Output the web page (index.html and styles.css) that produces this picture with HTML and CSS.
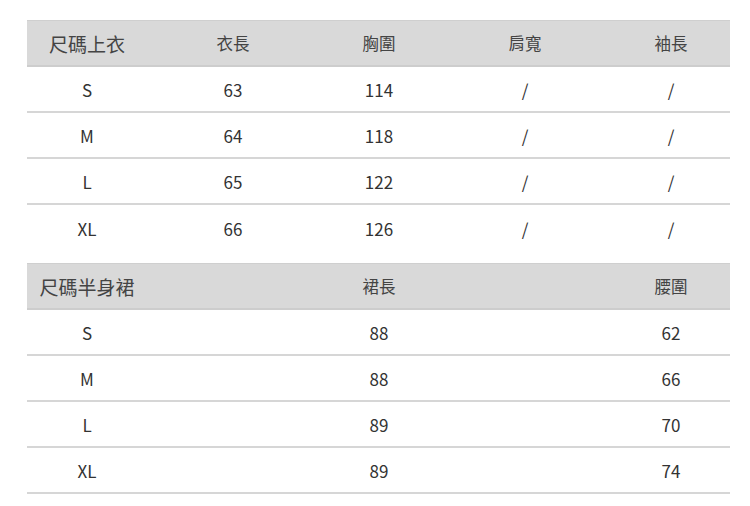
FILE: index.html
```html
<!DOCTYPE html>
<html lang="zh-Hant">
<head>
<meta charset="utf-8">
<link rel="stylesheet" href="styles.css">
</head>
<body>
<div class="page">
  <div class="tbl five">
    <div class="row head">
      <div class="cell first big">尺碼上衣</div>
      <div class="cell">衣長</div>
      <div class="cell">胸圍</div>
      <div class="cell">肩寬</div>
      <div class="cell last">袖長</div>
    </div>
    <div class="row line">
      <div class="cell first">S</div><div class="cell">63</div><div class="cell">114</div><div class="cell">/</div><div class="cell last">/</div>
    </div>
    <div class="row line">
      <div class="cell first">M</div><div class="cell">64</div><div class="cell">118</div><div class="cell">/</div><div class="cell last">/</div>
    </div>
    <div class="row line">
      <div class="cell first">L</div><div class="cell">65</div><div class="cell">122</div><div class="cell">/</div><div class="cell last">/</div>
    </div>
    <div class="row">
      <div class="cell first">XL</div><div class="cell">66</div><div class="cell">126</div><div class="cell">/</div><div class="cell last">/</div>
    </div>
  </div>
  <div class="tbl three">
    <div class="row head">
      <div class="cell first big">尺碼半身裙</div>
      <div class="cell">裙長</div>
      <div class="cell last">腰圍</div>
    </div>
    <div class="row line">
      <div class="cell first">S</div><div class="cell">88</div><div class="cell last">62</div>
    </div>
    <div class="row line">
      <div class="cell first">M</div><div class="cell">88</div><div class="cell last">66</div>
    </div>
    <div class="row line">
      <div class="cell first">L</div><div class="cell">89</div><div class="cell last">70</div>
    </div>
    <div class="row line">
      <div class="cell first">XL</div><div class="cell">89</div><div class="cell last">74</div>
    </div>
  </div>
</div>
</body>
</html>
```
FILE: styles.css
```css
html, body {
  margin: 0;
  padding: 0;
  background: #ffffff;
}
body {
  width: 750px;
  height: 506px;
  overflow: hidden;
  font-family: "Noto Sans CJK TC", "Noto Sans", sans-serif;
  color: #333333;
}
.page {
  padding: 20px 20px 0 27px;
  display: flex;
  flex-direction: column;
  gap: 12px;
}
.tbl {
  width: 703px;
  display: flex;
  flex-direction: column;
}
.row {
  display: grid;
  height: 46px;
  box-sizing: border-box;
  align-items: center;
  font-size: 17px;
  padding-top: 1px;
}
.five .row {
  grid-template-columns: 133px 146px 146px 146px 132px;
}
.three .row {
  grid-template-columns: 133px 438px 132px;
}
.cell {
  text-align: center;
  line-height: 1;
}
.cell.first {
  padding-right: 13px;
}
.cell.last {
  padding-left: 14px;
}
.head {
  height: 47px;
  padding-top: 0;
  background: #d9d9d9;
  border-top: 1px solid #cfcfcf;
  border-bottom: 2px solid #cdcdcd;
  color: #444444;
  font-size: 16.5px;
}
.head .big {
  font-size: 19px;
  color: #444444;
}
.line {
  border-bottom: 2px solid #d6d6d6;
}
```
